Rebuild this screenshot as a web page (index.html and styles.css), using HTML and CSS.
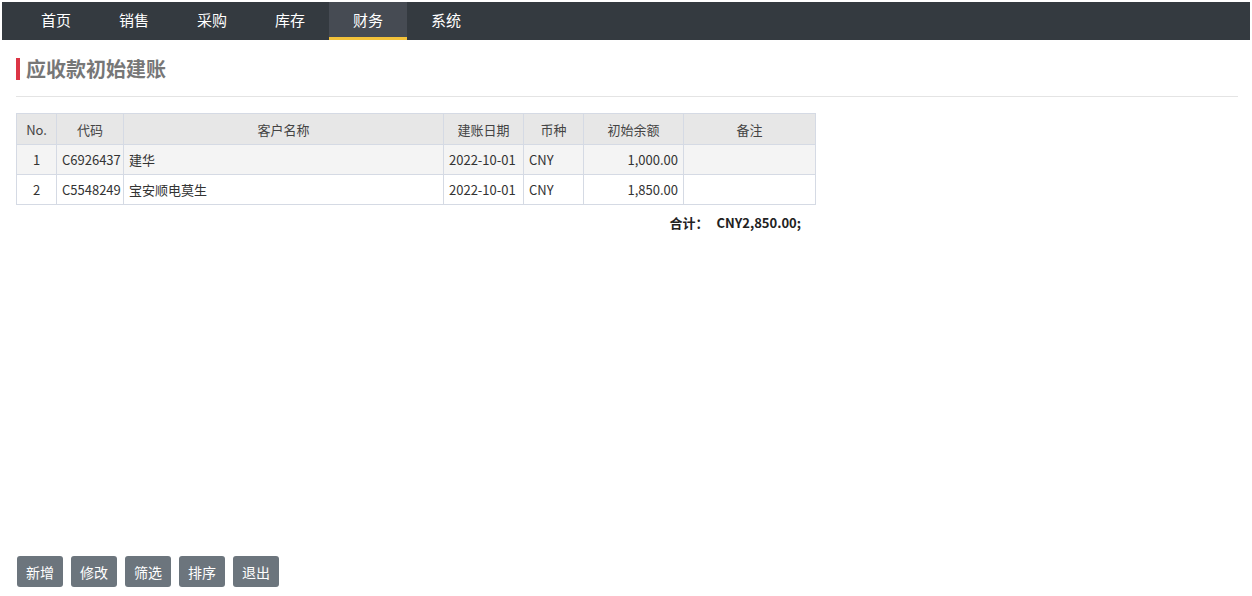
FILE: index.html
```html
<!DOCTYPE html>
<html lang="zh">
<head>
<meta charset="utf-8">
<link rel="stylesheet" href="styles.css">
</head>
<body>
<nav class="topnav">
  <a class="nav-item">首页</a>
  <a class="nav-item">销售</a>
  <a class="nav-item">采购</a>
  <a class="nav-item">库存</a>
  <a class="nav-item active">财务</a>
  <a class="nav-item">系统</a>
</nav>
<main class="page">
  <h1 class="title">应收款初始建账</h1>
  <div class="rule"></div>
  <div class="table-wrap">
    <table class="grid">
      <colgroup>
        <col class="c-no"><col class="c-code"><col class="c-name"><col class="c-date"><col class="c-cur"><col class="c-amt"><col class="c-memo">
      </colgroup>
      <thead>
        <tr><th>No.</th><th>代码</th><th>客户名称</th><th>建账日期</th><th>币种</th><th>初始余额</th><th>备注</th></tr>
      </thead>
      <tbody>
        <tr class="odd"><td class="ctr">1</td><td>C6926437</td><td>建华</td><td>2022-10-01</td><td>CNY</td><td class="num">1,000.00</td><td></td></tr>
        <tr><td class="ctr">2</td><td>C5548249</td><td>宝安顺电莫生</td><td>2022-10-01</td><td>CNY</td><td class="num">1,850.00</td><td></td></tr>
      </tbody>
    </table>
    <div class="total"><span class="total-label">合计：</span><span class="total-val">CNY2,850.00;</span></div>
  </div>
  <div class="spacer"></div>
  <div class="actions">
    <button class="btn">新增</button>
    <button class="btn">修改</button>
    <button class="btn">筛选</button>
    <button class="btn">排序</button>
    <button class="btn">退出</button>
  </div>
</main>
</body>
</html>
```
FILE: styles.css
```css
* { box-sizing: border-box; }
html, body { height: 100%; }
body {
  margin: 0;
  padding: 2px;
  font-family: "Noto Sans CJK SC", "Noto Sans", sans-serif;
  color: #333;
  background: #fff;
  display: flex;
  flex-direction: column;
}
.topnav {
  height: 38px;
  background: #343a40;
  display: flex;
  padding-left: 15px;
}
.nav-item {
  width: 78px;
  height: 38px;
  line-height: 36px;
  text-align: center;
  color: #fff;
  font-size: 15px;
  border-bottom: 3px solid transparent;
}
.nav-item.active {
  background: #464b53;
  border-bottom-color: #f3c23a;
}
.page {
  flex: 1;
  display: flex;
  flex-direction: column;
  padding: 0 12px 0 14px;
}
.title {
  margin: 18px 0 0 0;
  height: 22px;
  border-left: 4px solid #dc3545;
  padding-left: 6px;
  font-size: 20px;
  line-height: 22px;
  font-weight: bold;
  color: #777;
}
.rule {
  margin-top: 16px;
  border-top: 1px solid #e4e4e4;
}
.table-wrap {
  margin-top: 16px;
  width: 800px;
}
.grid {
  border-collapse: collapse;
  table-layout: fixed;
  width: 800px;
  font-size: 13px;
  color: #333;
}
.c-no { width: 40px; }
.c-code { width: 67px; }
.c-name { width: 320px; }
.c-date { width: 80px; }
.c-cur { width: 60px; }
.c-amt { width: 100px; }
.c-memo { width: 132px; }
.grid th, .grid td {
  border: 1px solid #d5dae4;
  padding: 0 5px;
  white-space: nowrap;
  overflow: hidden;
}
.grid th {
  height: 31px;
  background: #e7e7e7;
  font-weight: normal;
  color: #444;
}
.grid td { height: 30px; }
.grid tr.odd td { background: #f4f4f4; }
.grid td.ctr { text-align: center; }
.grid td.num { text-align: right; }
.total {
  display: flex;
  justify-content: flex-end;
  gap: 8px;
  padding-right: 15px;
  margin-top: 8px;
  font-size: 13px;
  font-weight: bold;
  color: #222;
}
.spacer { flex: 1; }
.actions {
  display: flex;
  gap: 8px;
  padding-left: 1px;
  margin-bottom: 7px;
}
.btn {
  width: 46px;
  height: 31px;
  border: none;
  border-radius: 3px;
  background: #6c757d;
  color: #fff;
  font-family: "Noto Sans CJK SC", sans-serif;
  font-size: 14px;
  padding: 0;
}
```
